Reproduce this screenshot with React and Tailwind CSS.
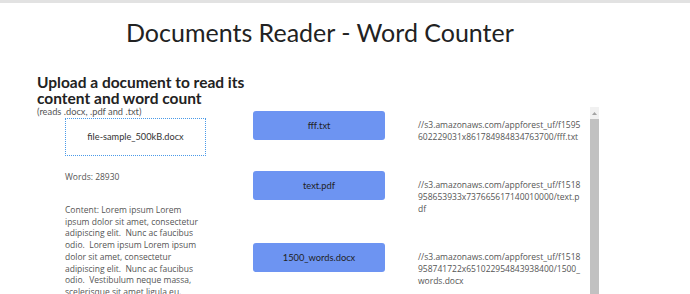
import React from 'react';

const files = [
     {
          name: 'fff.txt',
          url: '//s3.amazonaws.com/appforest_uf/f1595602229031x861784984834763700/fff.txt',
     },
     {
          name: 'text.pdf',
          url: '//s3.amazonaws.com/appforest_uf/f1518958653933x737665617140010000/text.pdf',
     },
     {
          name: '1500_words.docx',
          url: '//s3.amazonaws.com/appforest_uf/f1518958741722x651022954843938400/1500_words.docx',
     },
];

const content =
     'Content: Lorem ipsum Lorem ipsum dolor sit amet, consectetur adipiscing elit.\u00a0 Nunc ac faucibus odio.\u00a0 Lorem ipsum Lorem ipsum dolor sit amet, consectetur adipiscing elit.\u00a0 Nunc ac faucibus odio.\u00a0 Vestibulum neque massa, scelerisque sit amet ligula eu, congue molestie mi.';

const App = () => {
     return (
          <div className="w-[690px] h-[294px] overflow-hidden bg-white">
               {/* top strip */}
               <div className="h-[3px] bg-[#e2e2e2]" />

               <h1 className="pl-[126px] pt-[13px] font-['Lato',sans-serif] text-[25px] leading-[32px] text-[#222]">
                    Documents Reader - Word Counter
               </h1>

               <div className="flex mt-[26px]">
                    {/* Left column */}
                    <div className="w-[208px] ml-[37px] shrink-0">
                         <h2 className="w-[214px] font-['Lato',sans-serif] font-bold text-[15.5px] leading-[16px] text-[#222]">
                              Upload a document to read its content and word count
                         </h2>
                         <p className="mt-[1px] font-['Lato',sans-serif] text-[9.3px] leading-[10px] text-[#555]">
                              (reads .docx, .pdf and .txt)
                         </p>
                         <div className="ml-[28px] mt-[1px] w-[141px] h-[38px] border border-dotted border-[#4a9ae8] flex items-center justify-center font-['Lato',sans-serif] text-[9.2px] text-[#333]">
                              file-sample_500kB.docx
                         </div>
                         <p className="ml-[28px] mt-[15px] font-['Open_Sans',sans-serif] text-[8.5px] leading-[12px] text-[#555]">
                              Words: 28930
                         </p>
                         <p className="ml-[28px] mt-[21px] w-[140px] font-['Open_Sans',sans-serif] text-[8.5px] leading-[11.7px] text-[#555]">
                              {content}
                         </p>
                    </div>

                    {/* Right: scrolling list */}
                    <div className="mt-[33px] h-[200px] flex">
                         <div className="w-[345px] flex flex-col">
                              {files.map((f, i) => (
                                   <div key={f.name} className={'flex ' + (i === 0 ? 'pt-[4px]' : 'pt-[28px]')}>
                                        <div className="w-[132px] h-[29px] ml-[8px] rounded-[3px] bg-[#6d94f2] flex items-center justify-center font-['Lato',sans-serif] text-[9.3px] text-[#222] shrink-0">
                                             {f.name}
                                        </div>
                                        <p className="ml-[33px] mt-[8px] w-[165px] break-all font-['Open_Sans',sans-serif] text-[8.5px] leading-[12px] text-[#555]">
                                             {f.url}
                                        </p>
                                   </div>
                              ))}
                         </div>
                         {/* scrollbar */}
                         <div className="w-[9px] flex flex-col">
                              <div className="h-[12px] bg-[#f1f1f1] flex items-center justify-center">
                                   <svg width="5" height="3" viewBox="0 0 5 3">
                                        <path d="M0 3 L2.5 0 L5 3 Z" fill="#a3a3a3" />
                                   </svg>
                              </div>
                              <div className="flex-1 bg-[#c1c1c1]" />
                         </div>
                    </div>
               </div>
          </div>
     );
};

export default App;
